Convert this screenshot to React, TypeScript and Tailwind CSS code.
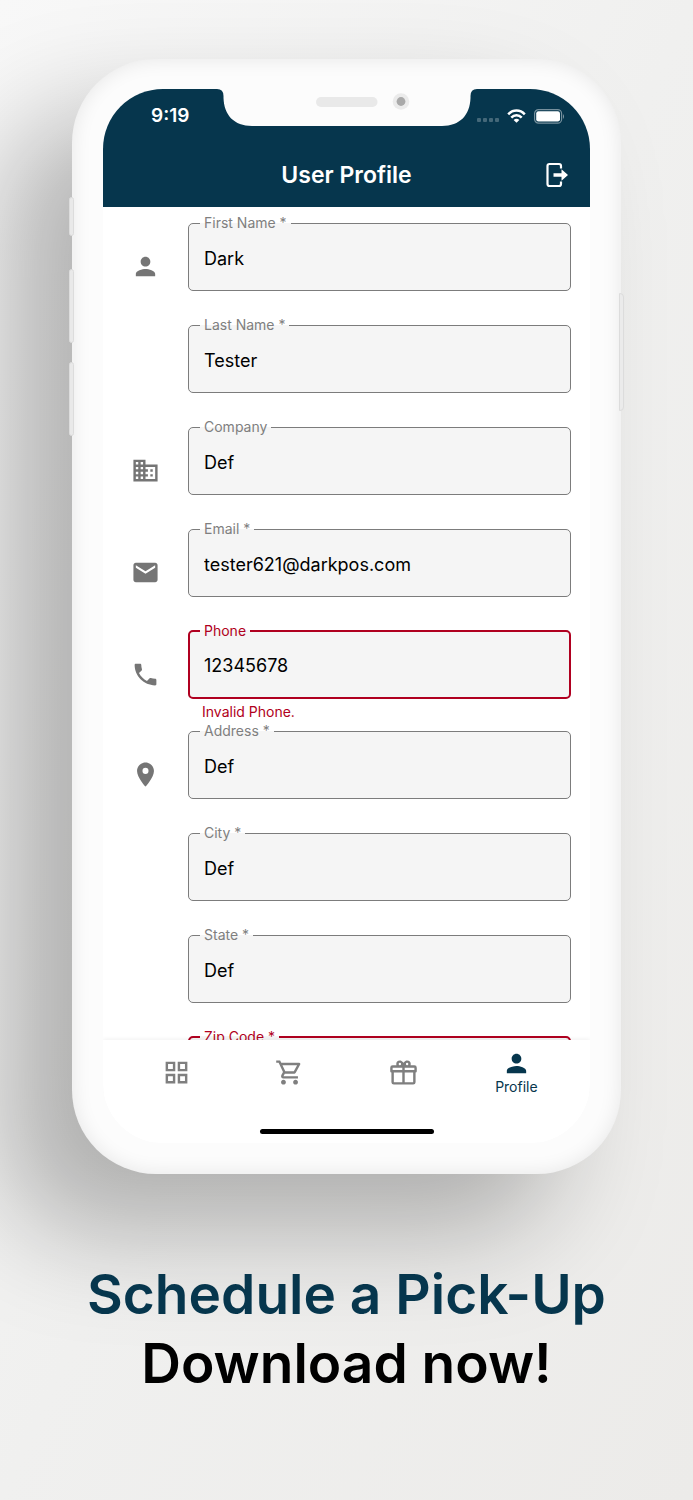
import { useState, type ReactNode } from 'react';
import type { IconType } from 'react-icons';
import {
  MdBusiness, MdEmail, MdOutlineGridView, MdOutlineShoppingCart,
  MdPerson, MdPhone, MdPlace
} from 'react-icons/md';

interface Field {
  id: string;
  label: string;
  value: string;
  type?: string;
  icon?: IconType;
  invalid?: boolean;
  error?: string;
}

const fields: Field[] = [
  { id: 'firstName', label: 'First Name *', value: 'Dark', icon: MdPerson },
  { id: 'lastName', label: 'Last Name *', value: 'Tester' },
  { id: 'company', label: 'Company', value: 'Def', icon: MdBusiness },
  { id: 'email', label: 'Email *', value: 'tester621@darkpos.com', type: 'email', icon: MdEmail },
  { id: 'phone', label: 'Phone', value: '12345678', type: 'tel', icon: MdPhone, invalid: true, error: 'Invalid Phone.' },
  { id: 'address', label: 'Address *', value: 'Def', icon: MdPlace },
  { id: 'city', label: 'City *', value: 'Def' },
  { id: 'state', label: 'State *', value: 'Def' },
  { id: 'zip', label: 'Zip Code *', value: '', invalid: true },
];

const GiftIcon = () => (
  <svg width="29" height="29" viewBox="0 0 24 24" fill="currentColor" aria-hidden="true">
    <path d="M22,12V20A2,2 0 0,1 20,22H4A2,2 0 0,1 2,20V12A1,1 0 0,1 1,11V8A2,2 0 0,1 3,6H6.17C6.06,5.69 6,5.35 6,5A3,3 0 0,1 9,2C10,2 10.88,2.5 11.43,3.24V3.23L12,4L12.57,3.23V3.24C13.12,2.5 14,2 15,2A3,3 0 0,1 18,5C18,5.35 17.94,5.69 17.83,6H21A2,2 0 0,1 23,8V11A1,1 0 0,1 22,12M4,20H11V12H4V20M20,20V12H13V20H20M9,4A1,1 0 0,0 8,5A1,1 0 0,0 9,6A1,1 0 0,0 10,5A1,1 0 0,0 9,4M15,4A1,1 0 0,0 14,5A1,1 0 0,0 15,6A1,1 0 0,0 16,5A1,1 0 0,0 15,4M3,8V10H11V8H3M13,8V10H21V8H13Z" />
  </svg>
);

const LogoutIcon = () => (
  <svg width="24" height="26" viewBox="0 0 24 26" aria-hidden="true">
    <path d="M16 6.5V4Q16 2 14 2H4.500Q2.500 2 2.500 4V22Q2.500 24 4.500 24H14Q16 24 16 22V19.500" fill="none" stroke="white" strokeWidth="2.200" />
    <path d="M8.500 11.200H16.500V7.200L23 13L16.500 18.800V14.800H8.500Z" fill="white" />
  </svg>
);

const WifiIcon = () => (
  <svg width="19" height="14" viewBox="0 0 19 14" aria-hidden="true">
    <g fill="none" stroke="white" strokeWidth="2.500">
      <path d="M1.200 5.300C5.900 0.300 13.100 0.300 17.800 5.300" />
      <path d="M4.300 8.600C7.200 5.500 11.800 5.500 14.700 8.600" />
    </g>
    <path d="M9.500 13.800L6.600 10.900Q9.500 8.600 12.400 10.900Z" fill="white" />
  </svg>
);

const BatteryIcon = () => (
  <svg width="31" height="15" viewBox="0 0 31 15" aria-hidden="true">
    <rect x="0.600" y="0.600" width="27" height="13.600" rx="4" fill="none" stroke="white" strokeOpacity="0.45" strokeWidth="1.200" />
    <rect x="2.200" y="2.300" width="23.800" height="10.200" rx="2.200" fill="white" />
    <path d="M29 5Q31 7.500 29 10Z" fill="white" fillOpacity="0.5" />
  </svg>
);

const Notch = () => (
  <svg width="260" height="37" viewBox="0 0 260 37" aria-hidden="true">
    <path d="M0 0Q6.500 0 6.500 7V9C7 26 17 37 35 37H225C243 37 253 26 253.500 9V7Q253.500 0 260 0Z" fill="#fcfcfc" />
    <rect x="99" y="8" width="61.500" height="10" rx="5" fill="#e9e9e9" />
    <circle cx="184" cy="12.500" r="8.300" fill="#ebebeb" />
    <circle cx="184" cy="12.500" r="4.400" fill="#a9a9a9" />
  </svg>
);

function ProfileField({ field }: { field: Field }) {
  const [value, setValue] = useState(field.value);
  const { invalid = false } = field;

  return (
    <div className={`flex ${invalid ? '' : 'mb-[25px]'}`}>
      <div className="flex w-[85px] shrink-0 justify-center pt-[38px] text-[#757575]">
        {field.icon && <field.icon size={29} />}
      </div>
      <div className="min-w-0 flex-1">
        <fieldset className={`rounded-[5px] bg-[#f5f5f5] ${invalid ? 'border-2 border-[#b00020]' : 'border border-[#7c7c7c]'}`}>
          <legend className={`px-1 text-sm leading-[18px] ${invalid ? 'ml-[10px] text-[#b00020]' : 'ml-[11px] text-[#7f7f7f]'}`}>
            <label htmlFor={field.id}>{field.label}</label>
          </legend>
          <input
            id={field.id}
            type={field.type ?? 'text'}
            value={value}
            onChange={e => setValue(e.target.value)}
            aria-invalid={invalid}
            className={`block w-full bg-transparent pb-[6px] text-lg text-black outline-none ${invalid ? 'h-[57px] px-[14px]' : 'h-[58px] px-[15px]'}`}
          />
        </fieldset>
        {field.error && <p className="h-[23px] pt-[3px] pl-[14px] text-sm leading-5 text-[#b00020]">{field.error}</p>}
      </div>
    </div>
  );
}

function NavItem({ label, active = false, children }: { label: string; active?: boolean; children: ReactNode }) {
  return (
    <a
      href={`#${label.toLowerCase()}`}
      aria-label={label}
      className={`flex h-16 flex-1 flex-col items-center justify-center ${active ? 'pt-px text-[#06364d]' : 'text-[#7f7f7f]'}`}
    >
      {children}
      {active && <span className="text-sm leading-[18px]">{label}</span>}
    </a>
  );
}

export default function App() {
  return (
    <div className="min-h-screen overflow-hidden bg-linear-to-br from-[#f8f8f8] via-[#f0f0ef] to-[#ecebe9] px-[72px] pt-[59px] pb-[102px] font-['Inter','Liberation_Sans',sans-serif]">
      <div className="relative rounded-[84px] bg-[#fcfcfc] pt-[30px] pr-[31px] pb-[31px] pl-[31px] shadow-[-68px_58px_110px_0_rgba(0,0,0,0.27),inset_0_0_20px_rgba(0,0,0,0.09)]">
        {/* Side buttons */}
        <span className="absolute top-[138px] -left-[3px] h-[39px] w-[5px] rounded-sm border border-[#dcdcdc] bg-[#e9e9e9]" />
        <span className="absolute top-[210px] -left-[3px] h-[74px] w-[5px] rounded-sm border border-[#dcdcdc] bg-[#e9e9e9]" />
        <span className="absolute top-[303px] -left-[3px] h-[74px] w-[5px] rounded-sm border border-[#dcdcdc] bg-[#e9e9e9]" />
        <span className="absolute top-[234px] -right-[3px] h-[118px] w-[5px] rounded-r-sm border border-[#dcdcdc] bg-[#ebebeb]" />

        <div className="overflow-hidden rounded-[60px] bg-white">
          <header className="relative bg-[#06364d] text-white">
            <div className="absolute inset-x-0 top-0 flex justify-center">
              <Notch />
            </div>
            <div className="flex h-[54px] items-center justify-between pr-[25px] pl-12">
              <time className="text-[19px] font-semibold">9:19</time>
              <div className="flex items-center gap-2">
                <span className="flex gap-[2px] pt-2">
                  <i className="size-1 rounded-[1px] bg-white/25" />
                  <i className="size-1 rounded-[1px] bg-white/25" />
                  <i className="size-1 rounded-[1px] bg-white/25" />
                  <i className="size-1 rounded-[1px] bg-white/25" />
                </span>
                <WifiIcon />
                <BatteryIcon />
              </div>
            </div>
            <div className="grid h-16 grid-cols-[1fr_auto_1fr] items-center px-[21px]">
              <h1 className="col-start-2 text-[23px] font-semibold">User Profile</h1>
              <button type="button" aria-label="Log out" className="justify-self-end">
                <LogoutIcon />
              </button>
            </div>
          </header>

          <main className="h-[833px] overflow-hidden pt-[7px] pr-[19px]">
            <form>
              {fields.map(field => (
                <ProfileField key={field.id} field={field} />
              ))}
            </form>
          </main>

          <footer className="relative bg-white pb-[9px] shadow-[0_-1px_4px_rgba(0,0,0,0.06)]">
            <nav className="flex px-[17px]">
              <NavItem label="Dashboard"><MdOutlineGridView size={29} /></NavItem>
              <NavItem label="Cart"><MdOutlineShoppingCart size={29} /></NavItem>
              <NavItem label="Rewards"><GiftIcon /></NavItem>
              <NavItem label="Profile" active><MdPerson size={29} /></NavItem>
            </nav>
            <div className="mx-auto mt-[25px] h-[5px] w-[174px] rounded-full bg-black" />
          </footer>
        </div>
      </div>

      <h2 className="relative mt-[86px] text-center text-[55px] leading-[69px] font-semibold whitespace-nowrap text-black">
        <span className="block text-[#06364d]">Schedule a Pick-Up</span>
        Download now!
      </h2>
    </div>
  );
}
